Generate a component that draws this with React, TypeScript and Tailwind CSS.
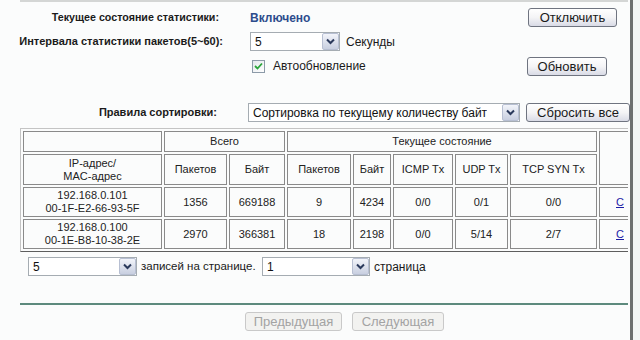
import React from 'react';

const font = { fontFamily: '"Liberation Sans", Arial, sans-serif' };

const Arrow = () => (
  <div className="flex h-[17px] w-[17px] shrink-0 items-center justify-center rounded-[2px] border border-[#b7bfd2] bg-gradient-to-b from-[#f2f4fa] to-[#c8cfe0]">
    <svg width="9" height="7" viewBox="0 0 9 7">
      <path d="M1 1.5 L4.5 5 L8 1.5" fill="none" stroke="#2b3a5c" strokeWidth="2" />
    </svg>
  </div>
);

const Select = ({ value, width }: { value: string; width: string }) => (
  <div className={`flex h-[19px] items-center justify-between border border-[#a5acb2] bg-white pl-[4px] text-[12px] text-[#111] ${width}`}>
    <span className="truncate">{value}</span>
    <Arrow />
  </div>
);

const Button = ({ label, width, disabled }: { label: string; width: string; disabled?: boolean }) => (
  <button
    className={`flex h-[19px] items-center justify-center rounded-[3px] border text-[13px] leading-none ${width} ${
      disabled
        ? 'border-[#c9c9c9] bg-[#f2f2f0] text-[#a3a3a3]'
        : 'border-[#6f7480] bg-gradient-to-b from-[#ffffff] via-[#f4f4f6] to-[#d9dbe6] text-[#1a1a1a]'
    }`}
  >
    {label}
  </button>
);

const td = 'border border-[#8a8a8a] text-center align-middle p-0';

const rows = [
  { ip: '192.168.0.101', mac: '00-1F-E2-66-93-5F', p: '1356', b: '669188', cp: '9', cb: '4234', icmp: '0/0', udp: '0/1', syn: '0/0' },
  { ip: '192.168.0.100', mac: '00-1E-B8-10-38-2E', p: '2970', b: '366381', cp: '18', cb: '2198', icmp: '0/0', udp: '5/14', syn: '2/7' },
];

export default function App() {
  return (
    <div className="h-[340px] w-[640px] overflow-hidden bg-[#f3f5f4]" style={font}>
      <div className="flex h-[340px] w-[633px] flex-col overflow-hidden border-r-[3px] border-[#6d6f6e] bg-[#fbfcfc] text-[#1a1a1a]">
        <div className="ml-[20px] h-[2px] w-[608px] bg-[#d4d6d5]" />

        {/* Состояние */}
        <div className="mt-[6px] flex h-[19px] items-center">
          <div className="w-[219px] text-right text-[10.7px] font-bold">Текущее состояние статистики:</div>
          <div className="ml-[31px] w-[278px] text-[12px] font-bold text-[#2d4c8c]">Включено</div>
          <Button label="Отключить" width="w-[89px]" />
        </div>

        <div className="mt-[5px] flex h-[19px] items-center">
          <div className="w-[223px] text-right text-[11px] font-bold">Интервала статистики пакетов(5~60):</div>
          <div className="ml-[27px] flex items-center gap-[6px]">
            <Select value="5" width="w-[90px]" />
            <span className="text-[12px]">Секунды</span>
          </div>
        </div>

        <div className="mt-[6px] flex h-[18px] items-center">
          <div className="ml-[252px] flex w-[275px] items-center gap-[8px]">
            <div className="flex h-[13px] w-[13px] items-center justify-center border border-[#8c9aa8] bg-gradient-to-br from-[#e4e8ec] to-[#ffffff]">
              <svg width="9" height="8" viewBox="0 0 9 8">
                <path d="M1 4 L3.5 6.5 L8 1.5" fill="none" stroke="#2aa53a" strokeWidth="1.8" />
              </svg>
            </div>
            <span className="text-[12px]">Автообновление</span>
          </div>
          <Button label="Обновить" width="w-[80px]" />
        </div>

        {/* Сортировка */}
        <div className="mt-[28px] flex h-[19px] items-center">
          <div className="w-[219px] text-right text-[11px] font-bold">Правила сортировки:</div>
          <div className="ml-[31px]">
            <Select value="Сортировка по текущему количеству байт" width="w-[272px]" />
          </div>
          <div className="ml-[6px]">
            <Button label="Сбросить все" width="w-[104px]" />
          </div>
        </div>

        {/* Таблица */}
        <div className="ml-[20px] mt-[6px] w-[608px] overflow-hidden">
          <table
            className="table-fixed border-separate border-spacing-[2px] border border-t-[#c4c4c4] border-l-[#c4c4c4] border-b-[#5e5e5e] border-r-[#5e5e5e] text-[11px] text-[#222]"
            style={{ width: 640 }}
          >
            <colgroup>
              <col style={{ width: 139 }} />
              <col style={{ width: 63 }} />
              <col style={{ width: 56 }} />
              <col style={{ width: 64 }} />
              <col style={{ width: 38 }} />
              <col style={{ width: 60 }} />
              <col style={{ width: 53 }} />
              <col style={{ width: 87 }} />
              <col style={{ width: 60 }} />
            </colgroup>
            <thead>
              <tr className="h-[21px]">
                <th className={`${td} font-normal`} />
                <th className={`${td} font-normal`} colSpan={2}>Всего</th>
                <th className={`${td} font-normal`} colSpan={5}>Текущее состояние</th>
                <th className={`${td} font-normal`} rowSpan={2} />
              </tr>
              <tr className="h-[31px]">
                <th className={`${td} font-normal leading-[13px]`}>
                  IP-адрес/
                  <br />
                  MAC-адрес
                </th>
                <th className={`${td} font-normal`}>Пакетов</th>
                <th className={`${td} font-normal`}>Байт</th>
                <th className={`${td} font-normal`}>Пакетов</th>
                <th className={`${td} font-normal`}>Байт</th>
                <th className={`${td} font-normal`}>ICMP Tx</th>
                <th className={`${td} font-normal`}>UDP Tx</th>
                <th className={`${td} font-normal`}>TCP SYN Tx</th>
              </tr>
            </thead>
            <tbody>
              {rows.map((r) => (
                <tr key={r.ip} className="h-[30px]">
                  <td className={`${td} leading-[13px]`}>
                    {r.ip}
                    <br />
                    {r.mac}
                  </td>
                  <td className={td}>{r.p}</td>
                  <td className={td}>{r.b}</td>
                  <td className={td}>{r.cp}</td>
                  <td className={td}>{r.cb}</td>
                  <td className={td}>{r.icmp}</td>
                  <td className={td}>{r.udp}</td>
                  <td className={td}>{r.syn}</td>
                  <td className={`${td} whitespace-nowrap pl-[16px] text-left`}>
                    <a className="text-[#1b1ba6] underline">С</a>
                  </td>
                </tr>
              ))}
            </tbody>
          </table>
        </div>

        {/* Пагинация */}
        <div className="ml-[28px] mt-[5px] flex h-[19px] items-center text-[12px]">
          <Select value="5" width="w-[109px]" />
          <span className="ml-[4px] w-[121px] text-[11.5px]">записей на странице.</span>
          <Select value="1" width="w-[108px]" />
          <span className="ml-[4px]">страница</span>
        </div>

        <div className="ml-[20px] mt-[27px] h-[2px] w-[608px] bg-[#5d8a7d]" />

        <div className="mt-[7px] flex h-[19px] items-center">
          <div className="ml-[245px]">
            <Button label="Предыдущая" width="w-[97px]" disabled />
          </div>
          <div className="ml-[10px]">
            <Button label="Следующая" width="w-[92px]" disabled />
          </div>
        </div>
      </div>
    </div>
  );
}
